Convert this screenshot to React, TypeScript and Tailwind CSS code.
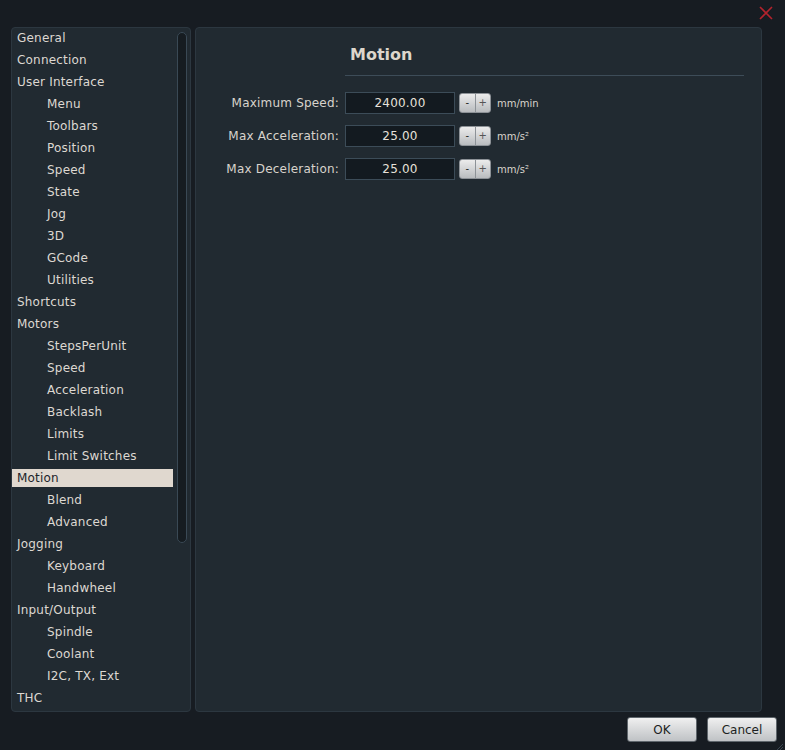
import React from 'react'

const font = { fontFamily: '"DejaVu Sans", Verdana, sans-serif' }

type Item = { label: string; sub?: boolean; active?: boolean }

const items: Item[] = [
  { label: 'General' },
  { label: 'Connection' },
  { label: 'User Interface' },
  { label: 'Menu', sub: true },
  { label: 'Toolbars', sub: true },
  { label: 'Position', sub: true },
  { label: 'Speed', sub: true },
  { label: 'State', sub: true },
  { label: 'Jog', sub: true },
  { label: '3D', sub: true },
  { label: 'GCode', sub: true },
  { label: 'Utilities', sub: true },
  { label: 'Shortcuts' },
  { label: 'Motors' },
  { label: 'StepsPerUnit', sub: true },
  { label: 'Speed', sub: true },
  { label: 'Acceleration', sub: true },
  { label: 'Backlash', sub: true },
  { label: 'Limits', sub: true },
  { label: 'Limit Switches', sub: true },
  { label: 'Motion', active: true },
  { label: 'Blend', sub: true },
  { label: 'Advanced', sub: true },
  { label: 'Jogging' },
  { label: 'Keyboard', sub: true },
  { label: 'Handwheel', sub: true },
  { label: 'Input/Output' },
  { label: 'Spindle', sub: true },
  { label: 'Coolant', sub: true },
  { label: 'I2C, TX, Ext', sub: true },
  { label: 'THC' },
]

const fields = [
  { label: 'Maximum Speed:', value: '2400.00', unit: 'mm/min' },
  { label: 'Max Acceleration:', value: '25.00', unit: 'mm/s²' },
  { label: 'Max Deceleration:', value: '25.00', unit: 'mm/s²' },
]

const SpinButtons = () => (
  <div className="flex h-[20px] w-[32px] rounded-[3px] border border-[#8d9297] bg-gradient-to-b from-[#ececec] to-[#b9bcbf] overflow-hidden">
    <div className="flex-1 flex items-center justify-center text-[10px] leading-none text-[#222] border-r border-[#8d9297]">-</div>
    <div className="flex-1 flex items-center justify-center text-[10px] leading-none text-[#555]">+</div>
  </div>
)

const DialogButton = ({ label }: { label: string }) => (
  <div className="w-[70px] h-[25px] flex items-center justify-center rounded-[3px] border border-[#5f666c] bg-gradient-to-b from-[#f0f0f0] to-[#bfc2c5] text-[12px] text-[#1c1f22]">
    {label}
  </div>
)

export default function App() {
  return (
    <div className="w-[785px] h-[750px] bg-[#171c22] flex flex-col overflow-hidden" style={font}>
      <div className="h-[27px] shrink-0 flex justify-end items-start pr-[12px] pt-[6px]">
        <svg width="14" height="14" viewBox="0 0 14 14">
          <path d="M1 1 L13 13 M13 1 L1 13" stroke="#b3232d" strokeWidth="1.6" />
        </svg>
      </div>

      <div className="flex gap-[4px] pl-[11px] h-[685px] shrink-0">
        {/* left tree */}
        <div className="relative w-[180px] h-full rounded-[4px] border border-[#2c3740] bg-[#212a31] overflow-hidden">
          <div className="flex flex-col gap-[4px] pt-[1px] pr-[17px]">
            {items.map((it, i) => (
              <div
                key={i}
                className={`h-[18px] flex items-center text-[12px] tracking-[0.2px] ${
                  it.active ? 'bg-[#e0d8cf] text-[#1e252b]' : 'text-[#ddd8d1]'
                } ${it.sub ? 'pl-[35px]' : 'pl-[5px]'}`}
              >
                {it.label}
              </div>
            ))}
          </div>
          <div className="absolute left-[165px] top-[4px] w-[10px] h-[511px] rounded-[5px] border border-[#3a4955] bg-[#161c21]" />
        </div>

        {/* right panel */}
        <div className="w-[567px] h-full rounded-[4px] border border-[#2c3740] bg-[#212a31] flex flex-col">
          <div className="pl-[149px] pr-[17px] pt-[16px]">
            <div className="pl-[5px] text-[16px] font-bold text-[#ddd6cc] leading-[22px]">Motion</div>
            <div className="mt-[9px] h-px bg-[#3d4c58]" />
          </div>
          <div className="flex flex-col gap-[11px] mt-[16px]">
            {fields.map((f) => (
              <div key={f.label} className="flex items-center">
                <div className="w-[149px] pr-[6px] text-right text-[12px] tracking-[0.2px] text-[#d8d3cc]">{f.label}</div>
                <div className="w-[110px] h-[22px] flex items-center justify-center border border-[#3c4c58] bg-[#131a20] text-[12px] tracking-[0.2px] text-[#e6e1da]">
                  {f.value}
                </div>
                <div className="ml-[4px]">
                  <SpinButtons />
                </div>
                <div className="ml-[6px] text-[10px] text-[#d8d3cc]">{f.unit}</div>
              </div>
            ))}
          </div>
        </div>
      </div>

      <div className="flex justify-end gap-[10px] pr-[8px] pt-[5px] shrink-0">
        <DialogButton label="OK" />
        <DialogButton label="Cancel" />
      </div>
      <div className="flex-1 flex justify-end items-end pr-[1px] pb-[1px]">
        <svg width="10" height="10" viewBox="0 0 10 10">
          <path d="M9 2 L2 9 M9 5 L5 9 M9 8 L8 9" stroke="#3a4650" strokeWidth="1" />
        </svg>
      </div>
    </div>
  )
}
